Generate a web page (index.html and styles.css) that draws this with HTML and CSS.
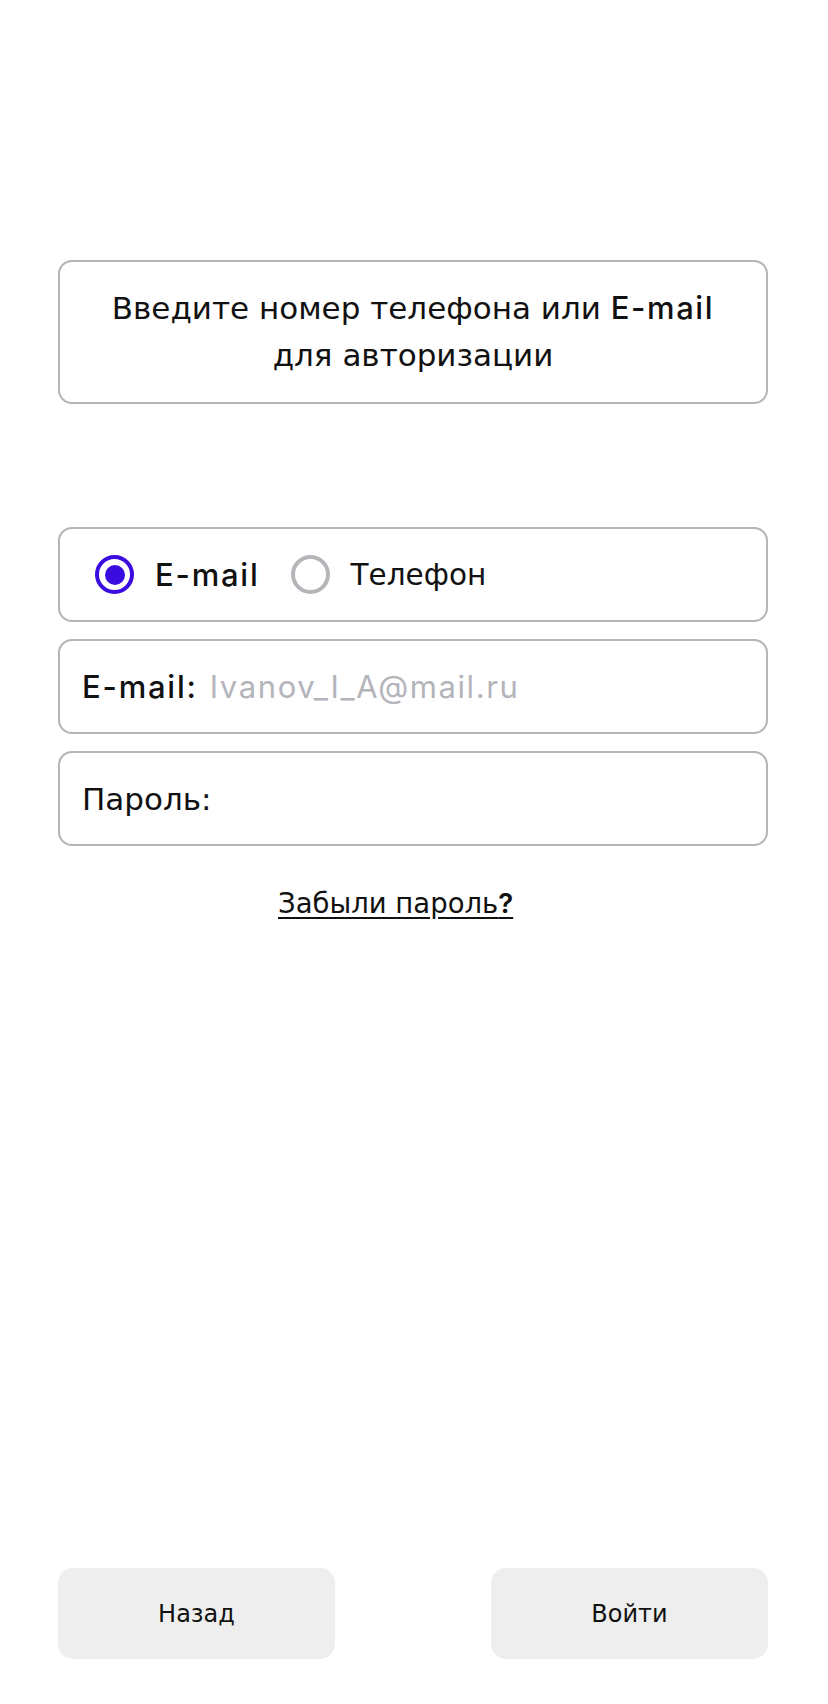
FILE: index.html
```html
<!DOCTYPE html>
<html lang="ru">
<head>
<meta charset="utf-8">
<title>Авторизация</title>
<link rel="stylesheet" href="styles.css">
</head>
<body>
<div class="page">
  <main class="form">
    <div class="box hint">Введите номер телефона или <span class="lat">E-mail</span><br>для авторизации</div>
    <div class="fields">
      <div class="box row radios">
        <label class="radio">
          <span class="dot checked"></span>
          <span class="lat">E-mail</span>
        </label>
        <label class="radio">
          <span class="dot"></span>
          <span class="cyr">Телефон</span>
        </label>
      </div>
      <div class="box row field">
        <span class="lat label">E-mail:</span>
        <span class="lat placeholder">Ivanov_I_A@mail.ru</span>
      </div>
      <div class="box row field">
        <span class="label pw">Пароль:</span>
      </div>
    </div>
    <a class="forgot" href="#">Забыли пароль<span class="lat q">?</span></a>
  </main>
  <footer class="actions">
    <button class="btn">Назад</button>
    <button class="btn">Войти</button>
  </footer>
</div>
</body>
</html>
```

FILE: styles.css
```css
html, body {
  margin: 0;
  padding: 0;
  background: #ffffff;
}
body {
  font-family: "DejaVu Sans", sans-serif;
  color: #111111;
}
.page {
  width: 828px;
  height: 1704px;
  box-sizing: border-box;
  padding: 260px 60px 0 58px;
  display: flex;
  flex-direction: column;
}
.form {
  flex: 1;
  display: flex;
  flex-direction: column;
}
.box {
  box-sizing: border-box;
  border: 2px solid #b4b4b9;
  border-radius: 14px;
  background: #fff;
}
.lat {
  font-family: Inter, "DejaVu Sans", sans-serif;
  font-weight: 500;
  letter-spacing: 1.8px;
}
.hint {
  height: 144px;
  font-size: 31px;
  line-height: 47px;
  text-align: center;
  padding-top: 22px;
}
.hint .lat {
  letter-spacing: 1.6px;
}
.fields {
  margin-top: 123px;
  display: flex;
  flex-direction: column;
  gap: 17px;
}
.row {
  height: 95px;
  display: flex;
  align-items: center;
  font-size: 31px;
}
.radios {
  padding-left: 35px;
  gap: 31px;
}
.radio {
  display: flex;
  align-items: center;
  gap: 21px;
}
.cyr {
  font-size: 29.5px;
}
.dot {
  width: 39px;
  height: 39px;
  box-sizing: border-box;
  border-radius: 50%;
  border: 4px solid #b5b5ba;
  display: flex;
  align-items: center;
  justify-content: center;
}
.dot.checked {
  border-color: #3a0ce0;
}
.dot.checked::after {
  content: "";
  width: 20px;
  height: 20px;
  border-radius: 50%;
  background: #3a0ce0;
}
.field {
  padding-left: 22px;
  gap: 12px;
}
.placeholder {
  color: #b4b4bb;
  font-weight: 400;
  letter-spacing: 1.6px;
}
.forgot {
  align-self: flex-start;
  margin: 40px 0 0 220px;
  font-size: 27.5px;
  color: #111111;
  text-decoration: underline;
  text-underline-offset: 4px;
}
.forgot .q {
  letter-spacing: 0;
  font-weight: 600;
}
.actions {
  display: flex;
  justify-content: space-between;
  padding-bottom: 45px;
}
.btn {
  width: 277px;
  height: 91px;
  border: none;
  border-radius: 15px;
  background: #eeeeee;
  font-family: "DejaVu Sans", sans-serif;
  font-size: 24px;
  color: #111111;
}
```
